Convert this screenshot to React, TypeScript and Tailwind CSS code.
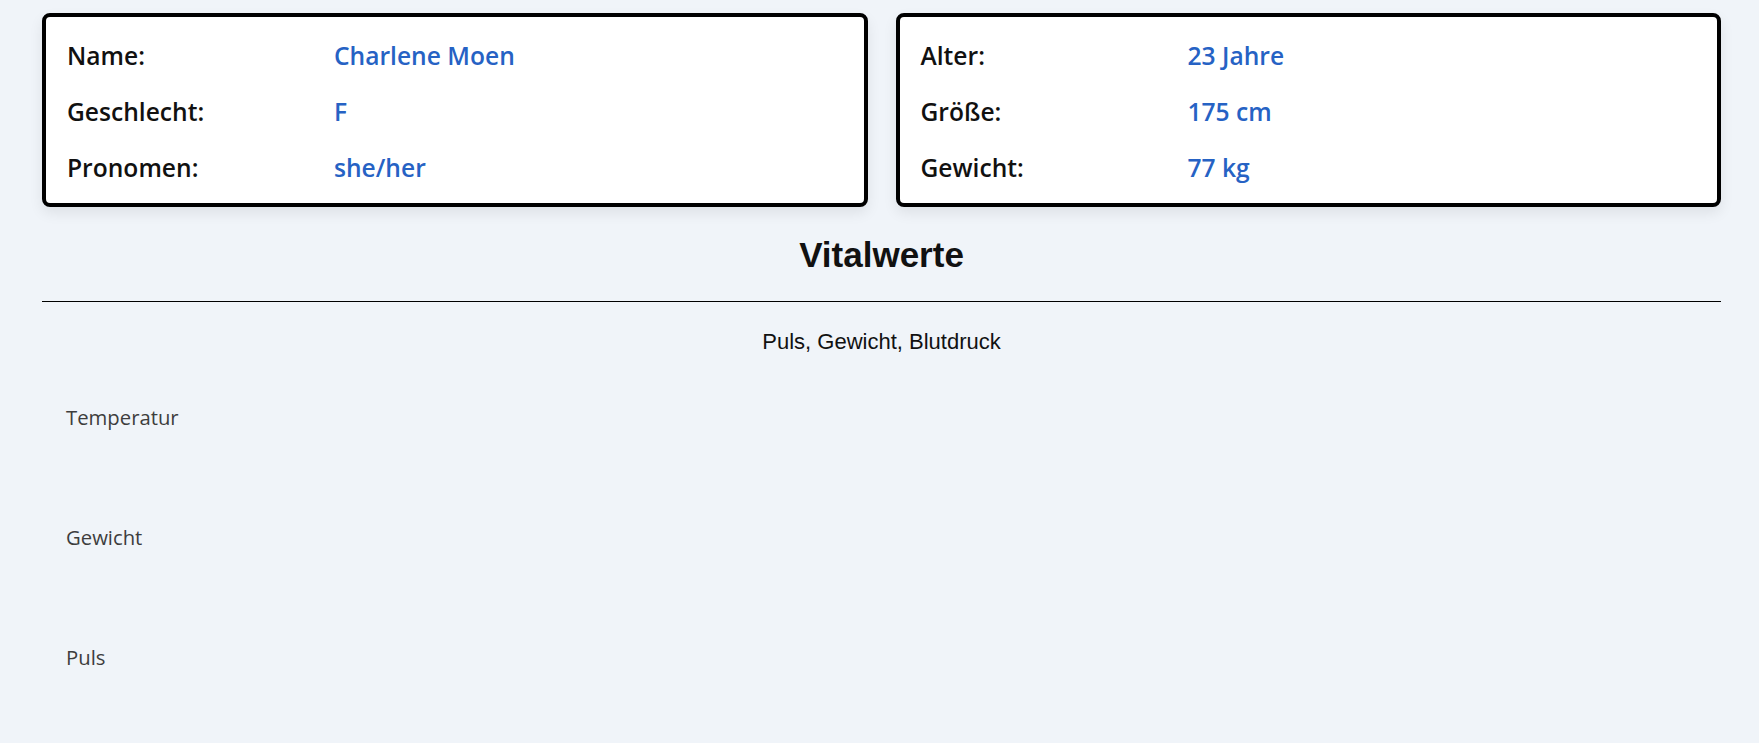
import React from 'react';

type Row = { label: string; value: string };

const personal: Row[] = [
  { label: 'Name:', value: 'Charlene Moen' },
  { label: 'Geschlecht:', value: 'F' },
  { label: 'Pronomen:', value: 'she/her' },
];

const body: Row[] = [
  { label: 'Alter:', value: '23 Jahre' },
  { label: 'Größe:', value: '175 cm' },
  { label: 'Gewicht:', value: '77 kg' },
];

const charts = ['Temperatur', 'Gewicht', 'Puls'];

function InfoCard({ rows }: { rows: Row[] }) {
  return (
    <div className="bg-white border-4 border-black rounded-lg shadow-[0_6px_14px_rgba(0,0,0,0.08)] px-[21px] pt-[23px] pb-[19px] flex flex-col gap-6">
      {rows.map((r) => (
        <div key={r.label} className="flex text-[24.6px] leading-[32px] font-semibold">
          <span className="w-[267px] shrink-0 text-[#111]">{r.label}</span>
          <span className="text-[#2662c4]">{r.value}</span>
        </div>
      ))}
    </div>
  );
}

function App() {
  return (
    <div className="min-h-screen bg-[#f0f4f9] pl-[42px] pr-[38px] pt-[13px] font-['Open_Sans',sans-serif]">
      <div className="grid grid-cols-2 gap-[28px]">
        <InfoCard rows={personal} />
        <InfoCard rows={body} />
      </div>

      <h2 className="mt-[28px] text-center text-[35px] leading-[40px] font-bold text-[#111] font-['Liberation_Sans',Arial,sans-serif]">
        Vitalwerte
      </h2>
      <hr className="mt-[26px] border-0 border-t border-black" />

      <p className="mt-[28px] text-center text-[22px] leading-[24px] text-[#111] font-['Liberation_Sans',Arial,sans-serif]">
        Puls, Gewicht, Blutdruck
      </p>

      <div className="mt-[49px] flex flex-col">
        {charts.map((c) => (
          <div key={c} className="h-[120px] pl-[24px]">
            <div className="text-[20.3px] leading-[28px] text-[#3d3d3d]">{c}</div>
          </div>
        ))}
      </div>
    </div>
  );
}

export default App;
